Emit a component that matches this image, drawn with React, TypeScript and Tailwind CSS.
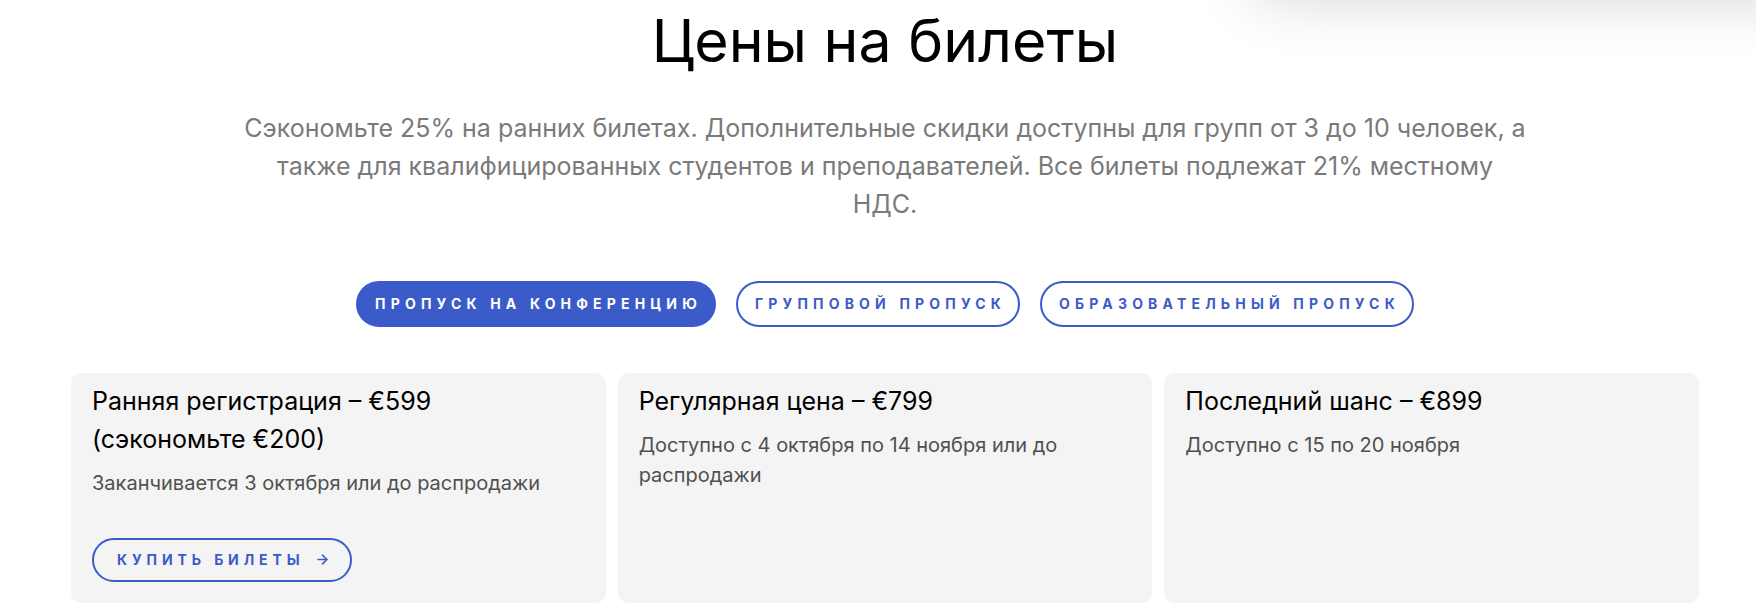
import { ArrowRight } from "lucide-react";

export default function App() {
  const tabs = [
    { id: 1, label: "Пропуск на конференцию", active: true },
    { id: 2, label: "Групповой пропуск", active: false },
    { id: 3, label: "Образовательный пропуск", active: false },
  ];

  const tiers = [
    {
      id: 1,
      title: "Ранняя регистрация – €599 (сэкономьте €200)",
      note: "Заканчивается 3 октября или до распродажи",
      buy: true,
    },
    {
      id: 2,
      title: "Регулярная цена – €799",
      note: "Доступно с 4 октября по 14 ноября или до распродажи",
      buy: false,
    },
    {
      id: 3,
      title: "Последний шанс – €899",
      note: "Доступно с 15 по 20 ноября",
      buy: false,
    },
  ];

  return (
    <div className="relative h-[609px] w-full overflow-hidden bg-white font-['Inter',sans-serif]">
      {/* header card sitting just above the viewport, only its shadow shows */}
      <div className="absolute -top-[70px] left-[1245px] h-[70px] w-[600px] rounded-bl-[40px] bg-white shadow-[0_0_60px_rgba(0,0,0,0.16)]" />

      <section className="flex flex-col items-center pl-[71px] pr-[57px] pt-[6px]">
        <h2 className="text-[59px] leading-[1.2] font-normal text-black">Цены на билеты</h2>
        <p className="mt-[32px] max-w-[1360px] text-center text-[25px] leading-[38px] text-[#7a7a7a]">
          Сэкономьте 25% на ранних билетах. Дополнительные скидки доступны для групп от 3 до 10 человек, а
          <br />
          также для квалифицированных студентов и преподавателей. Все билеты подлежат 21% местному
          <br />
          НДС.
        </p>

        <div className="mt-[58px] flex gap-[20px]">
          {tabs.map((tab) => (
            <button
              key={tab.id}
              className={
                tab.active
                  ? "h-[46px] rounded-full border-2 border-[#3b5bc9] bg-[#3b5bc9] pl-[17px] pr-[12px] text-[14px] font-bold uppercase tracking-[0.37em] text-white"
                  : "h-[46px] rounded-full border-2 border-[#3b5bc9] bg-white pl-[17px] pr-[12px] text-[14px] font-bold uppercase tracking-[0.37em] text-[#3b5bc9]"
              }
            >
              {tab.label}
            </button>
          ))}
        </div>

        <div className="mt-[46px] grid w-full grid-cols-3 gap-[12px]">
          {tiers.map((tier) => (
            <div key={tier.id} className="flex flex-col items-start rounded-[10px] bg-[#f4f4f4] pl-[21px] pr-[24px] pt-[9px] pb-[21px]">
              <h3 className="text-[25px] leading-[38px] font-normal text-black">{tier.title}</h3>
              <p className="mt-[10px] text-[20px] leading-[30px] text-[#505050]">{tier.note}</p>
              {tier.buy && (
                <button className="mt-[40px] flex h-[44px] items-center gap-[10px] rounded-full border-2 border-[#3b5bc9] pl-[23px] pr-[20px] text-[14px] font-bold uppercase tracking-[0.35em] text-[#3b5bc9]">
                  Купить билеты
                  <ArrowRight size={15} strokeWidth={2.5} />
                </button>
              )}
            </div>
          ))}
        </div>
      </section>
    </div>
  );
}
